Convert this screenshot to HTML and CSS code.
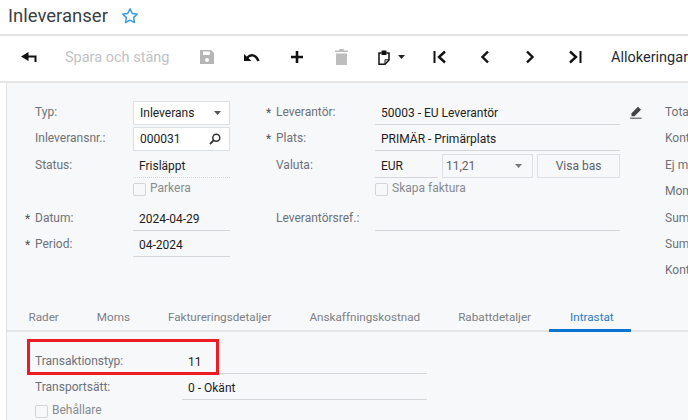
FILE: index.html
```html
<!DOCTYPE html>
<html lang="sv">
<head>
<meta charset="utf-8">
<title>Inleveranser</title>
<link rel="stylesheet" href="styles.css">
</head>
<body>
<header class="title-bar">
  <h1 class="title">Inleveranser</h1>
  <svg class="star" width="18" height="18" viewBox="0 0 18 18"><path d="M9 1.800l2.200 4.600 5 .7-3.600 3.500.9 5L9 13.200l-4.500 2.400.9-5L1.800 7.100l5-.7z" fill="none" stroke="#3a9be6" stroke-width="1.500" stroke-linejoin="round"/></svg>
</header>
<nav class="toolbar">
  <span class="tool tool-back"><svg width="16" height="10" viewBox="0 0 16 10"><path d="M7.500 0L0 4.500 7.500 9z" fill="#111"/><path d="M5 4.500h9.500V10" fill="none" stroke="#111" stroke-width="2"/></svg></span>
  <span class="tool-text disabled">Spara och stäng</span>
  <span class="tool tool-save"><svg width="14" height="14" viewBox="0 0 14 14"><path fill="#b5b5b5" fill-rule="evenodd" d="M0 0h11l3 3v11H0zM3 1.500V5h7V1.500zM7 8a2 2 0 1 0 0 4 2 2 0 0 0 0-4z"/></svg></span>
  <span class="tool"><svg width="16" height="10" viewBox="0 0 16 10"><path d="M0 2v7h7.500z" fill="#111"/><path d="M3 6c3.500-4 8.500-4 11.500 3" fill="none" stroke="#111" stroke-width="2.400"/></svg></span>
  <span class="tool"><svg width="14" height="14" viewBox="0 0 14 14"><path d="M7 1v12M1 7h12" stroke="#111" stroke-width="2.600"/></svg></span>
  <span class="tool"><svg width="13" height="16" viewBox="0 0 13 16"><path fill="#bdbdbd" d="M4.500 0h4l.6 1.500H13V3H0V1.500h3.900zM1 4.500h11V16H1z"/></svg></span>
  <span class="tool tool-clip">
    <svg width="12" height="15" viewBox="0 0 12 15"><path d="M3.500 3H1v11.200h6L11 10V3H8.500" fill="none" stroke="#111" stroke-width="1.500"/><path d="M3.500 .5h5V5l-1 0h-4z" fill="#111"/><path d="M7 14V9.800h4" fill="none" stroke="#111"/></svg>
    <svg width="7" height="4" viewBox="0 0 7 4"><path d="M0 0h7L3.500 4z" fill="#222"/></svg>
  </span>
  <span class="tool"><svg width="14" height="14" viewBox="0 0 14 14"><path d="M1.500 1v12" stroke="#111" stroke-width="2"/><path d="M12 1.500L6 7l6 5.500" fill="none" stroke="#111" stroke-width="2.400"/></svg></span>
  <span class="tool"><svg width="10" height="14" viewBox="0 0 10 14"><path d="M8 1.500L2.500 7 8 12.500" fill="none" stroke="#111" stroke-width="2.400"/></svg></span>
  <span class="tool"><svg width="10" height="14" viewBox="0 0 10 14"><path d="M2 1.500L7.500 7 2 12.500" fill="none" stroke="#111" stroke-width="2.400"/></svg></span>
  <span class="tool"><svg width="14" height="14" viewBox="0 0 14 14"><path d="M12.500 1v12" stroke="#111" stroke-width="2"/><path d="M2 1.500L8 7l-6 5.500" fill="none" stroke="#111" stroke-width="2.400"/></svg></span>
  <span class="tool-text tool-alloc">Allokeringar</span>
</nav>
<main class="panel">
  <section class="form">
    <div class="col col-left">
      <span class="label">Typ:</span>
      <div class="box select"><span>Inleverans</span><svg width="7" height="4" viewBox="0 0 7 4"><path d="M0 0h7L3.500 4z" fill="#555"/></svg></div>
      <span class="label">Inleveransnr.:</span>
      <div class="box select"><span>000031</span><svg width="12" height="12" viewBox="0 0 12 12"><circle cx="7.300" cy="4.700" r="3.500" fill="none" stroke="#333" stroke-width="1.500"/><path d="M4.800 7.200L1 11" stroke="#333" stroke-width="1.800"/></svg></div>
      <span class="label">Status:</span>
      <div class="value dotted">Frisläppt</div>
      <span></span>
      <label class="check"><i class="tick"></i>Parkera</label>
      <span class="label req">Datum:</span>
      <div class="value line">2024-04-29</div>
      <span class="label req">Period:</span>
      <div class="value line">04-2024</div>
    </div>
    <div class="col col-mid">
      <span class="label req">Leverantör:</span>
      <div class="value line">50003 - EU Leverantör</div>
      <span class="label req">Plats:</span>
      <div class="value line">PRIMÄR - Primärplats</div>
      <span class="label">Valuta:</span>
      <div class="currency">
        <div class="value line">EUR</div>
        <div class="box rate"><span>11,21</span><svg width="7" height="4" viewBox="0 0 7 4"><path d="M0 0h7L3.500 4z" fill="#777"/></svg></div>
        <div class="box base">Visa bas</div>
      </div>
      <span></span>
      <label class="check"><i class="tick"></i>Skapa faktura</label>
      <span class="label">Leverantörsref.:</span>
      <div class="value line"></div>
    </div>
    <div class="pencil"><svg width="12" height="13" viewBox="0 0 12 13"><path d="M8 .8l3 3L4.500 10.300H1.500V7.300z" fill="#444"/><path d="M0 12.200h11.500" stroke="#444"/></svg></div>
    <div class="col-right">
      <span class="label">Tota</span>
      <span class="label">Kont</span>
      <span class="label">Ej m</span>
      <span class="label">Mom</span>
      <span class="label">Sum</span>
      <span class="label">Sum</span>
      <span class="label">Kont</span>
    </div>
  </section>
  <div class="tabs">
    <span class="tab">Rader</span>
    <span class="tab">Moms</span>
    <span class="tab">Faktureringsdetaljer</span>
    <span class="tab">Anskaffningskostnad</span>
    <span class="tab">Rabattdetaljer</span>
    <span class="tab active">Intrastat</span>
  </div>
  <section class="intrastat">
    <div class="highlight"></div>
    <span class="label">Transaktionstyp:</span>
    <div class="value line">11</div>
    <span class="label">Transportsätt:</span>
    <div class="value line">0 - Okänt</div>
    <label class="check check-wide"><i class="tick"></i>Behållare</label>
  </section>
</main>
</body>
</html>
```
FILE: styles.css
```css
* { box-sizing: border-box; }
html, body { height: 420px; overflow: hidden; }
body { margin: 0; background: #fff; font-family: Roboto, "Liberation Sans", sans-serif; font-size: 12px; color: #222; }

.title-bar { height: 36px; display: flex; align-items: center; gap: 13px; padding: 0 0 2px 8px; border-bottom: 2px solid #e2e2e2; }
.title { margin: 0; font-size: 18.5px; font-weight: 400; color: #3a3f45; }
.star { margin-top: -1px; }

.toolbar { height: 47px; display: flex; align-items: center; padding: 0 0 3px 7px; white-space: nowrap; border-bottom: 2px solid #e6e6e6; }
.tool { width: 45px; display: flex; justify-content: center; align-items: center; }
.tool-back { margin-right: 13px; }
.tool-save { margin-left: 15px; }
.tool-clip { width: 53px; gap: 8px; padding-left: 2px; }
.tool-text { font-size: 14.5px; }
.tool-alloc { margin-left: 14px; color: #1f2a36; }
.disabled { color: #c0c2c5; }

.panel { position: relative; margin-left: 6px; height: 337px; background: #f7f8fa; border-left: 1px solid #e2e2e2; }

.form { height: 186px; padding: 18px 0 0 18px; display: flex; }
.col { display: grid; grid-auto-rows: 26.4px; align-content: start; }
.col-left { grid-template-columns: 10px 98px 97px; width: 205px; }
.col-left .label, .col-mid .label { grid-column: 2; }
.col-left > span:empty, .col-mid > span:empty { grid-column: 2; }
.col-mid { grid-template-columns: 10px 99px 245px; width: 354px; margin-left: 36px; }
.pencil { width: 30px; padding: 5px 0 0 10px; }
.col-right { width: 23px; flex: none; display: grid; grid-auto-rows: 26.4px; align-content: start; margin-left: 15px; white-space: nowrap; }

.label { position: relative; height: 24px; padding-top: 1px; line-height: 21px; color: #6d7278; font-size: 12px; }
.req::before { content: "*"; position: absolute; left: -10px; top: 2px; color: #555; }

.box { height: 24px; border: 1px solid #dcdfe3; background: #fff; padding: 0 8px 0 6px; display: flex; align-items: center; justify-content: space-between; }
.value { height: 24px; padding: 3px 0 0 6px; line-height: 18px; color: #1d1d1d; }
.line { border-bottom: 1px solid #d4d6d9; }
.dotted { border-bottom: 1px dotted #d4d6d9; }

.currency { display: flex; gap: 4px; height: 24px; }
.currency .value { width: 63px; }
.rate { width: 91px; background: #f7f8fa; color: #5d6268; padding-right: 10px; padding-left: 3px; }
.base { width: 83px; background: #f7f8fa; color: #5d6268; justify-content: center; padding: 0; }

.check { display: flex; align-items: flex-start; gap: 4px; color: #878b90; line-height: 15px; padding-top: 1px; }
.tick { width: 13px; height: 13px; margin-top: 2px; border: 1px solid #d2d4d7; border-radius: 2px; background: #f7f8fa; flex: none; }

.tabs { height: 45px; margin-top: 18px; display: flex; align-items: flex-end; padding-left: 2.5px; border-bottom: 2px solid #e2e4e6; }
.tab { padding: 0 19px; height: 24px; line-height: 18px; color: #7c8085; font-size: 11.7px; margin-bottom: -2px; }
.active { color: #2a7cc7; padding: 0 17px 0 21px; border-bottom: 3px solid #0a74d0; margin-left: -1px; }

.intrastat { position: relative; display: grid; grid-template-columns: 147px 245px; grid-auto-rows: 26px; padding: 18px 0 0 28px; }
.check-wide { grid-column: 1 / 3; }
.highlight { position: absolute; left: 20px; top: 7px; width: 192px; height: 36px; border: 3px solid #ed1c24; }
```
